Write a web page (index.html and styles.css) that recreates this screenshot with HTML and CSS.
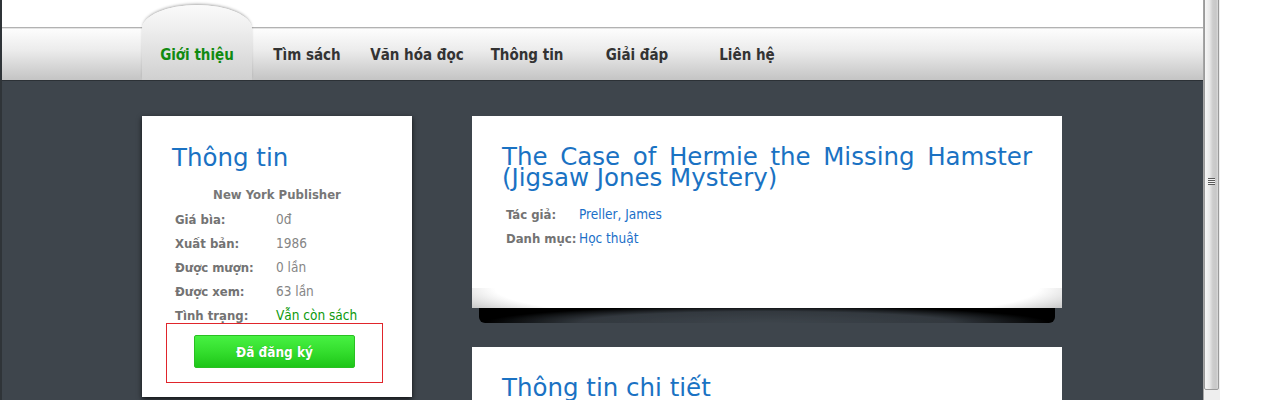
FILE: index.html
```html
<!DOCTYPE html>
<html lang="vi">
<head>
<meta charset="utf-8">
<title>Thông tin sách</title>
<link rel="stylesheet" href="styles.css">
</head>
<body>
<div class="window">
  <div class="page">
    <header class="header">
      <nav class="nav">
        <a class="tab active">Giới thiệu</a>
        <a class="tab">Tìm sách</a>
        <a class="tab">Văn hóa đọc</a>
        <a class="tab">Thông tin</a>
        <a class="tab">Giải đáp</a>
        <a class="tab">Liên hệ</a>
      </nav>
    </header>
    <main class="content">
      <div class="wrap">
        <aside class="card side">
          <h2 class="title">Thông tin</h2>
          <div class="publisher">New York Publisher</div>
          <div class="rows side-rows">
            <span class="label">Giá bìa:</span><span class="value">0đ</span>
            <span class="label">Xuất bản:</span><span class="value">1986</span>
            <span class="label">Được mượn:</span><span class="value">0 lần</span>
            <span class="label">Được xem:</span><span class="value">63 lần</span>
            <span class="label">Tình trạng:</span><span class="value ok">Vẫn còn sách</span>
          </div>
          <div class="reg-box">
            <button class="btn">Đã đăng ký</button>
          </div>
        </aside>
        <section class="main">
          <div class="card book">
            <h2 class="title justify">The Case of Hermie the Missing Hamster (Jigsaw Jones Mystery)</h2>
            <div class="rows book-rows">
              <span class="label">Tác giả:</span><span class="value link">Preller, James</span>
              <span class="label">Danh mục:</span><span class="value link">Học thuật</span>
            </div>
          </div>
          <div class="card detail">
            <h2 class="title">Thông tin chi tiết</h2>
          </div>
        </section>
      </div>
    </main>
  </div>
  <div class="scrollbar">
    <div class="thumb"><span class="grip"></span></div>
  </div>
</div>
</body>
</html>
```
FILE: styles.css
```css
html, body {
  margin: 0;
  padding: 0;
  height: 400px;
  overflow: hidden;
  background: #fff;
}

.window {
  display: flex;
  height: 400px;
  background: #fff;
}

.page {
  width: 1201px;
  flex: none;
  border-left: 2px solid #2f3438;
  background: #3e454c;
  display: flex;
  flex-direction: column;
  overflow: hidden;
}

.header {
  height: 80px;
  flex: none;
  background: linear-gradient(to bottom,
    #ffffff 0, #ffffff 27px,
    #b2b2b2 27px, #b2b2b2 28px,
    #e4e4e4 28px, #e4e4e4 29px,
    #fdfdfd 29px, #ececec 50px, #c4c4c4 80px);
}

.nav {
  width: 920px;
  height: 80px;
  margin-left: 140px;
  display: flex;
  align-items: flex-end;
}

.tab {
  box-sizing: border-box;
  width: 110px;
  height: 51px;
  padding-top: 2px;
  line-height: 49px;
  text-align: center;
  font-family: "DejaVu Sans Condensed", "DejaVu Sans", sans-serif;
  font-stretch: condensed;
  font-weight: bold;
  font-size: 15px;
  color: #333;
  cursor: pointer;
}

.tab.active {
  height: 75px;
  padding-top: 26px;
  color: #118a11;
  background: linear-gradient(to bottom, #fafafa 0, #efefef 30%, #d0d0d0 100%);
  border-radius: 55px 55px 0 0 / 24px 24px 0 0;
  box-shadow: 0 -2px 3px -1px rgba(0, 0, 0, 0.35);
}

.content {
  flex: 1;
  border-top: 1px solid #2c3136;
  padding-top: 35px;
}

.wrap {
  width: 920px;
  margin-left: 140px;
  display: flex;
  gap: 60px;
  align-items: flex-start;
}

.card {
  box-sizing: border-box;
  background: #fff;
  padding: 30px 30px 0;
}

.title {
  margin: 0;
  font-family: "DejaVu Sans", sans-serif;
  font-weight: normal;
  font-size: 24.5px;
  line-height: 21px;
  color: #1a72c3;
}

.title.justify {
  text-align: justify;
}

.side {
  width: 270px;
  height: 281px;
  padding-top: 31px;
  box-shadow: 0 2px 5px rgba(0, 0, 0, 0.75);
}

.publisher {
  margin-top: 15px;
  line-height: 24px;
  text-align: center;
  font-family: "DejaVu Sans Condensed", "DejaVu Sans", sans-serif;
  font-stretch: condensed;
  font-weight: bold;
  font-size: 13px;
  color: #777;
}

.rows {
  display: grid;
  grid-auto-rows: 24px;
  align-items: center;
  font-family: "DejaVu Sans Condensed", "DejaVu Sans", sans-serif;
  font-stretch: condensed;
}

.side-rows {
  grid-template-columns: 101px 1fr;
  padding-left: 3px;
}

.book-rows {
  grid-template-columns: 73px 1fr;
  padding-left: 4px;
  margin-top: 14px;
}

.label {
  font-weight: bold;
  font-size: 13px;
  color: #737373;
  white-space: nowrap;
}

.value {
  font-size: 13.5px;
  color: #858585;
  white-space: nowrap;
}

.value.ok {
  color: #0c990c;
}

.value.link {
  color: #1b6fc8;
}

.reg-box {
  box-sizing: border-box;
  width: 217px;
  height: 60px;
  margin: -4px 0 0 -6px;
  padding-bottom: 3px;
  border: 1px solid #e0252b;
  display: flex;
  align-items: center;
  justify-content: center;
}

.btn {
  box-sizing: border-box;
  width: 161px;
  height: 33px;
  border: 1px solid #29c022;
  border-radius: 2px;
  background: linear-gradient(to bottom, #47f142 0, #34de2e 50%, #1ec618 100%);
  color: #fff;
  font-family: "DejaVu Sans Condensed", "DejaVu Sans", sans-serif;
  font-stretch: condensed;
  font-weight: bold;
  font-size: 13.5px;
  text-shadow: 0 0 1px rgba(0, 80, 0, 0.4);
  padding: 0;
  cursor: pointer;
}

.main {
  width: 590px;
  display: flex;
  flex-direction: column;
  gap: 39px;
}

.book {
  position: relative;
  height: 192px;
}

.book::before {
  content: "";
  position: absolute;
  left: 0;
  right: 0;
  bottom: 0;
  height: 20px;
  background: radial-gradient(ellipse 340px 40px at 50% 0, rgba(255,255,255,0) 80%, rgba(200,200,200,1) 100%);
}

.book::after {
  content: "";
  position: absolute;
  left: 7px;
  right: 7px;
  top: 100%;
  height: 15px;
  background: radial-gradient(ellipse 72% 170% at 50% 100%, #3e454c 0, rgba(50,56,62,0.95) 45%, #000 68%);
  border-radius: 0 0 6px 6px / 0 0 6px 6px;
  filter: blur(0.6px);
}

.detail {
  height: 120px;
}

.scrollbar {
  box-sizing: border-box;
  width: 17px;
  flex: none;
  height: 400px;
  background: #eeeeee;
  border-left: 1px solid #a4a4a4;
  overflow: hidden;
}

.thumb {
  box-sizing: border-box;
  width: 15px;
  height: 418px;
  margin-top: -28px;
  border: 1px solid #9a9a9a;
  border-radius: 0 0 2px 2px;
  background: linear-gradient(to right, #f6f6f6 0, #e8e8e8 35%, #cdcdcd 60%, #c8c8c8 85%, #dadada 100%);
  display: flex;
  align-items: center;
  justify-content: center;
}

.grip {
  display: block;
  width: 7px;
  height: 7px;
  background: repeating-linear-gradient(to bottom, #5a5a5a 0, #5a5a5a 1px, #f2f2f2 1px, #f2f2f2 2px);
}
```
